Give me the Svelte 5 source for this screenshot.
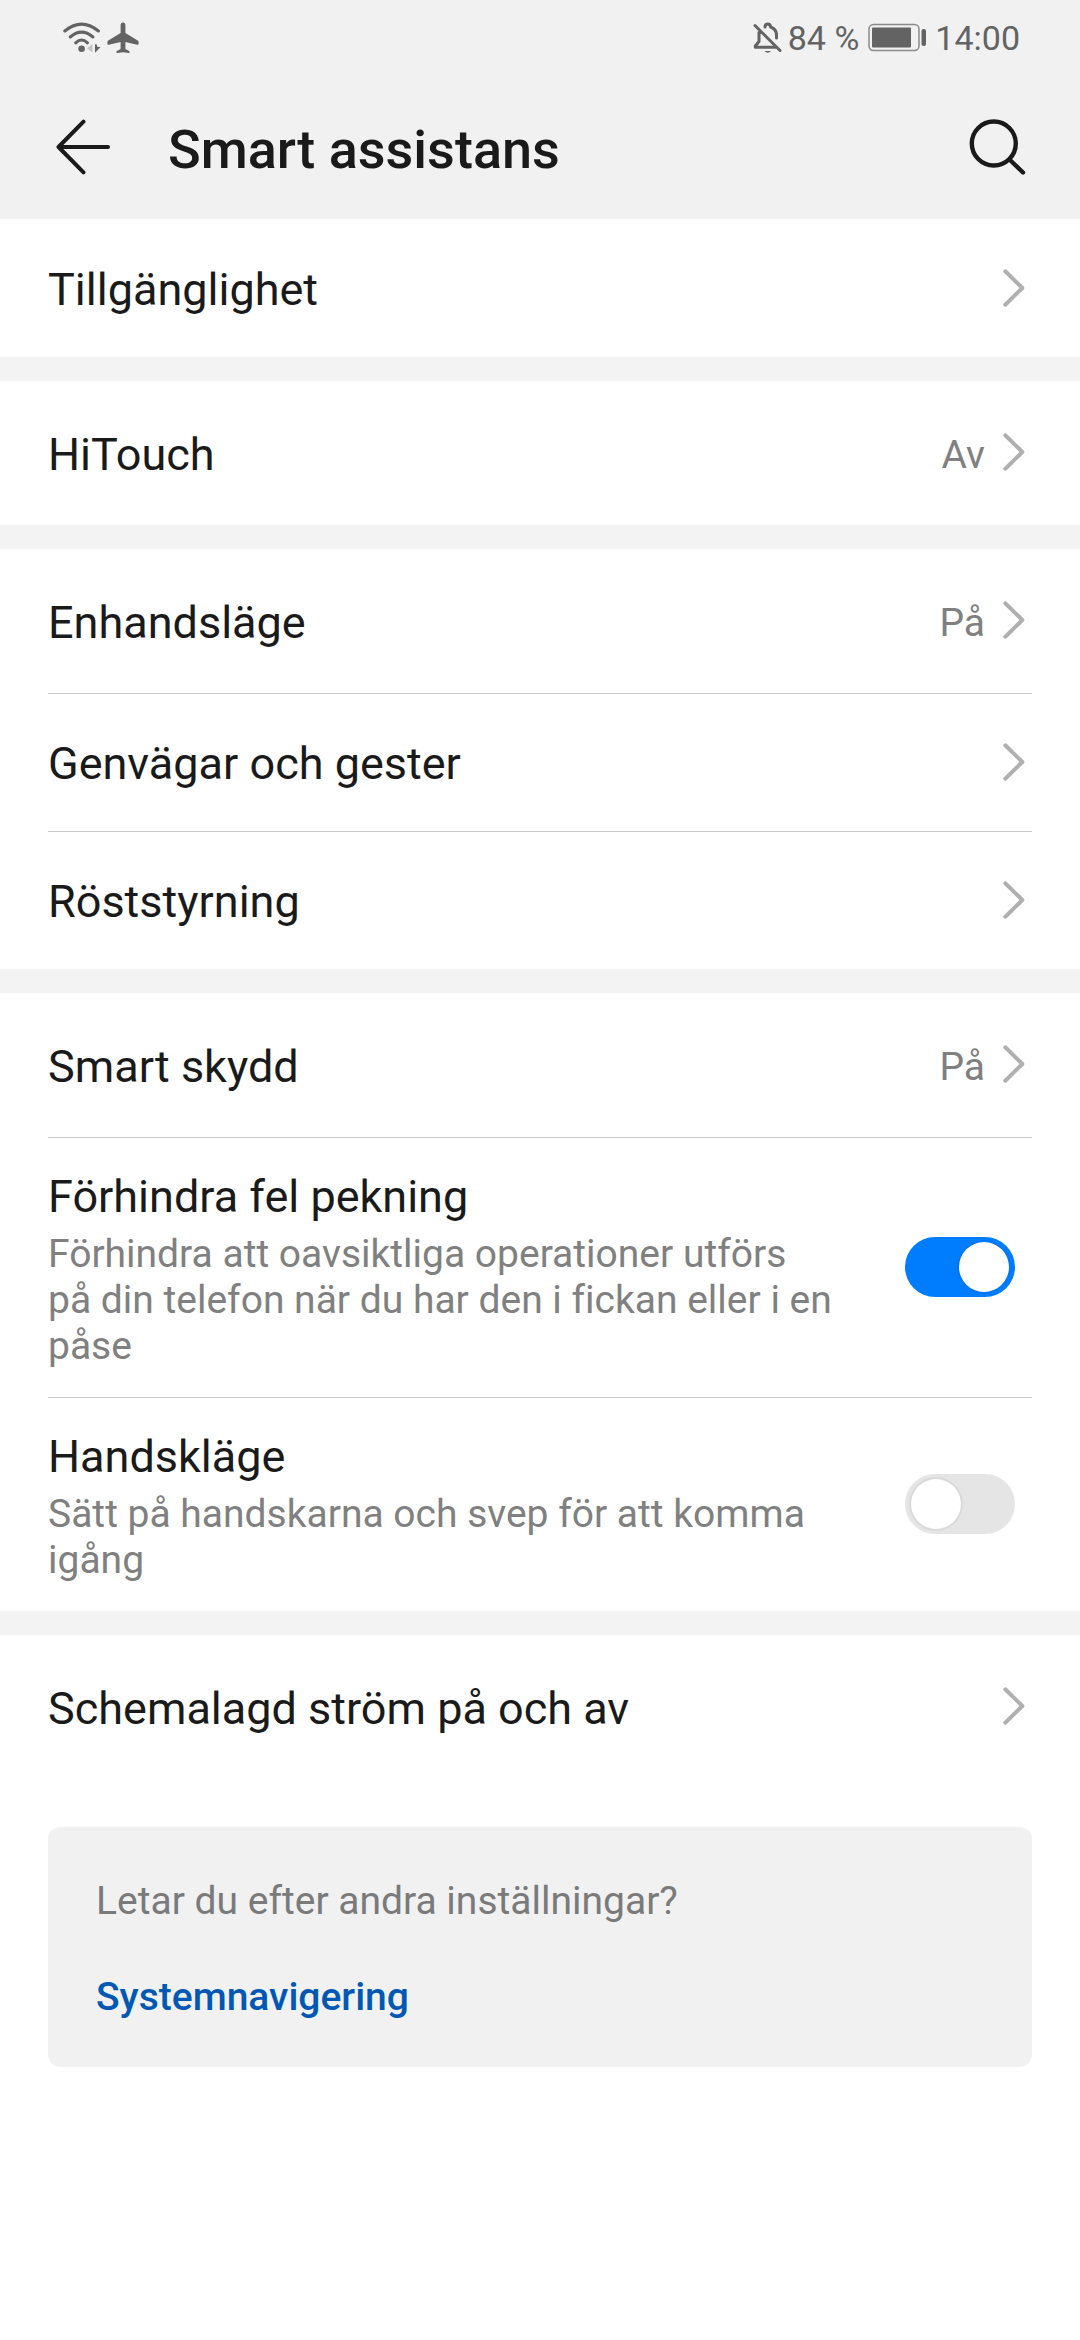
<script>
  const groups = [
    [{ title: 'Tillgänglighet', size: 'low' }],
    [{ title: 'HiTouch', value: 'Av', size: 'high' }],
    [
      { title: 'Enhandsläge', value: 'På', size: 'high' },
      { title: 'Genvägar och gester', size: 'low' },
      { title: 'Röststyrning', size: 'low' },
    ],
    [
      { title: 'Smart skydd', value: 'På', size: 'high' },
      {
        title: 'Förhindra fel pekning',
        text: 'Förhindra att oavsiktliga operationer utförs på din telefon när du har den i fickan eller i en påse',
        toggle: true,
        on: true,
      },
      {
        title: 'Handskläge',
        text: 'Sätt på handskarna och svep för att komma igång',
        toggle: true,
        on: false,
      },
    ],
    [{ title: 'Schemalagd ström på och av', size: 'high' }],
  ];
</script>

<div class="screen">
  <header>
    <div class="status">
      <svg class="wifi" width="38" height="32" viewBox="0 0 38 32" fill="none" stroke="#636363" stroke-width="3" stroke-linecap="round">
        <path d="M1.8 9Q18.6-4.800 35.4 9M7.300 15Q18.600 5.200 29.900 15M12.700 20.800Q18.600 15.200 24.500 20.800" />
        <circle cx="18.600" cy="26.800" r="3.300" fill="#636363" stroke="none" />
        <path d="M29.500 22v8.500l-5.500-4.300z" fill="#c4c4c4" stroke="none" />
        <path d="M32 22.300v8.500l2.500-2.500 3-3.300h-3L33.500 22.300z" fill="#636363" stroke="none" />
      </svg>
      <svg class="plane" width="32" height="32" viewBox="0 0 32 32" fill="#636363">
        <path d="M16 .5c1.500 0 2.400 1 2.400 2.600v7.800l12.300 7.700c.6.400.9 1 .9 1.700v1.500c0 .9-.6 1.200-1.400 1L18.400 20v7l3.700 1.900c.5.400.6 1 .4 1.800-.1.400-.5.500-1 .400L16 30.200l-5.500.9c-.5.100-.9 0-1-.400-.2-.8-.1-1.400.4-1.800l3.700-1.900v-7L1.800 22.800c-.8.200-1.400-.1-1.400-1v-1.500c0-.7.3-1.300.9-1.700l12.300-7.700V3.100C13.600 1.500 14.500.5 16 .5z" />
      </svg>
      <span class="fill"></span>
      <svg class="bell" width="30" height="32" viewBox="0 0 30 32" fill="none" stroke="#636363" stroke-width="3" stroke-linecap="round" stroke-linejoin="round">
        <path d="M12 5Q12 2 14.700 2T17.500 5Q23.500 7 23.500 13V16M6 10.500V19.500L2.300 24V25.300H22.500M2 3.500L27 28.500" />
        <path d="M11.500 29h6.500q-3.200 3.600-6.500 0z" fill="#636363" stroke="none" />
      </svg>
      <span class="battery-text">84 %</span>
      <svg class="battery" width="60" height="30" viewBox="0 0 60 30">
        <rect x="1" y="1.500" width="50" height="26" rx="4.500" fill="none" stroke="#8a8a8a" stroke-width="1.500" />
        <rect x="4" y="4.500" width="39" height="20" rx="1" fill="#636363" />
        <rect x="53.500" y="6" width="4.500" height="17" rx="2" fill="#636363" />
      </svg>
      <span class="clock">14:00</span>
    </div>
    <div class="bar">
      <svg class="back" width="56" height="56" viewBox="0 0 56 56" fill="none" stroke="#1a1a1a" stroke-width="4" stroke-linecap="round" stroke-linejoin="round">
        <path d="M28.500 2.700L3.500 28L28.500 53.300M3.500 28H53" />
      </svg>
      <h1>Smart assistans</h1>
      <svg class="search" width="58" height="58" viewBox="0 0 58 58" fill="none" stroke="#1a1a1a" stroke-width="4.400" stroke-linecap="round">
        <circle cx="25.800" cy="25.500" r="22" />
        <path d="M42 42L55 54.500" />
      </svg>
    </div>
  </header>

  <main>
    {#each groups as group}
      <section>
        {#each group as item}
          <div class="row {item.toggle ? 'switch-row' : item.size}">
            {#if item.toggle}
              <div class="copy">
                <div class="title">{item.title}</div>
                <p>{item.text}</p>
              </div>
              <span class="toggle" class:on={item.on}><span class="knob"></span></span>
            {:else}
              <span class="title">{item.title}</span>
              {#if item.value}<span class="value">{item.value}</span>{/if}
              <svg class="chevron" width="24" height="40" viewBox="0 0 24 40" fill="none" stroke="#b0b0b0" stroke-width="4" stroke-linecap="round" stroke-linejoin="round">
                <path d="M3.300 3.300L20.300 20L3.300 36.700" />
              </svg>
            {/if}
          </div>
        {/each}
      </section>
    {/each}
    <aside>
      <div class="question">Letar du efter andra inställningar?</div>
      <div class="link">Systemnavigering</div>
    </aside>
  </main>
</div>

<style>
  :global(body) {
    margin: 0;
    background: #fff;
  }
  .screen {
    width: 1080px;
    height: 2340px;
    overflow: hidden;
    background: #fff;
    font-family: Roboto, 'Liberation Sans', sans-serif;
    font-variant-ligatures: none;
    color: #1a1a1a;
  }
  header {
    height: 219px;
    background: #f1f1f1;
  }
  .status {
    display: flex;
    height: 75px;
    align-items: center;
    padding: 0 60px 0 63px;
    color: #636363;
    font-size: 34px;
  }
  .plane {
    margin-left: 6px;
  }
  .fill {
    flex: 1;
  }
  .battery-text {
    margin-left: 5px;
  }
  .battery {
    margin: 0 7px 0 9px;
  }
  .bar {
    display: flex;
    height: 144px;
    align-items: center;
    padding: 0 54px 0 55px;
  }
  .back,
  .search {
    margin-bottom: 1px;
  }
  h1 {
    flex: 1;
    margin: 5px 0 0 57px;
    font-size: 54px;
    font-weight: 500;
    line-height: 64px;
  }
  main {
    display: flex;
    flex-direction: column;
  }
  section {
    padding: 0 48px;
  }
  section + section {
    border-top: 24px solid #f3f3f3;
  }
  .row {
    display: flex;
    box-sizing: border-box;
    align-items: center;
    padding-right: 6px;
  }
  .low {
    height: 138px;
  }
  .high {
    height: 144px;
  }
  .high .chevron,
  .row + .low .chevron {
    margin-bottom: 2px;
  }
  .row + .row {
    border-top: 1px solid #c9c9c9;
  }
  .title {
    flex: 1;
    padding-top: 3px;
    font-size: 45px;
    line-height: 54px;
  }
  .value {
    margin-right: 17px;
    padding-top: 3px;
    color: #808080;
    font-size: 39px;
  }
  .row.switch-row {
    padding: 29px 17px 28px 0;
  }
  .copy {
    flex: 1;
  }
  p {
    width: 790px;
    margin: 7px 0 0;
    color: #808080;
    font-size: 39px;
    line-height: 46px;
  }
  .toggle {
    display: flex;
    box-sizing: border-box;
    width: 110px;
    height: 60px;
    margin-bottom: 2px;
    padding: 5px 6px;
    border-radius: 30px;
    background: #e5e5e5;
  }
  .toggle.on {
    justify-content: flex-end;
    background: #007dff;
  }
  .knob {
    width: 50px;
    height: 50px;
    border-radius: 50%;
    background: #fff;
    box-shadow: 0 0 0 2px rgba(0, 0, 0, 0.05);
  }
  aside {
    box-sizing: border-box;
    height: 240px;
    margin: 48px 48px 0;
    padding: 50px 48px 0;
    border-radius: 12px;
    background: #f1f1f1;
    font-size: 39px;
    line-height: 48px;
  }
  .question {
    color: #7a7a7a;
  }
  .link {
    margin-top: 48px;
    color: #0058b5;
    font-weight: 500;
  }
</style>
